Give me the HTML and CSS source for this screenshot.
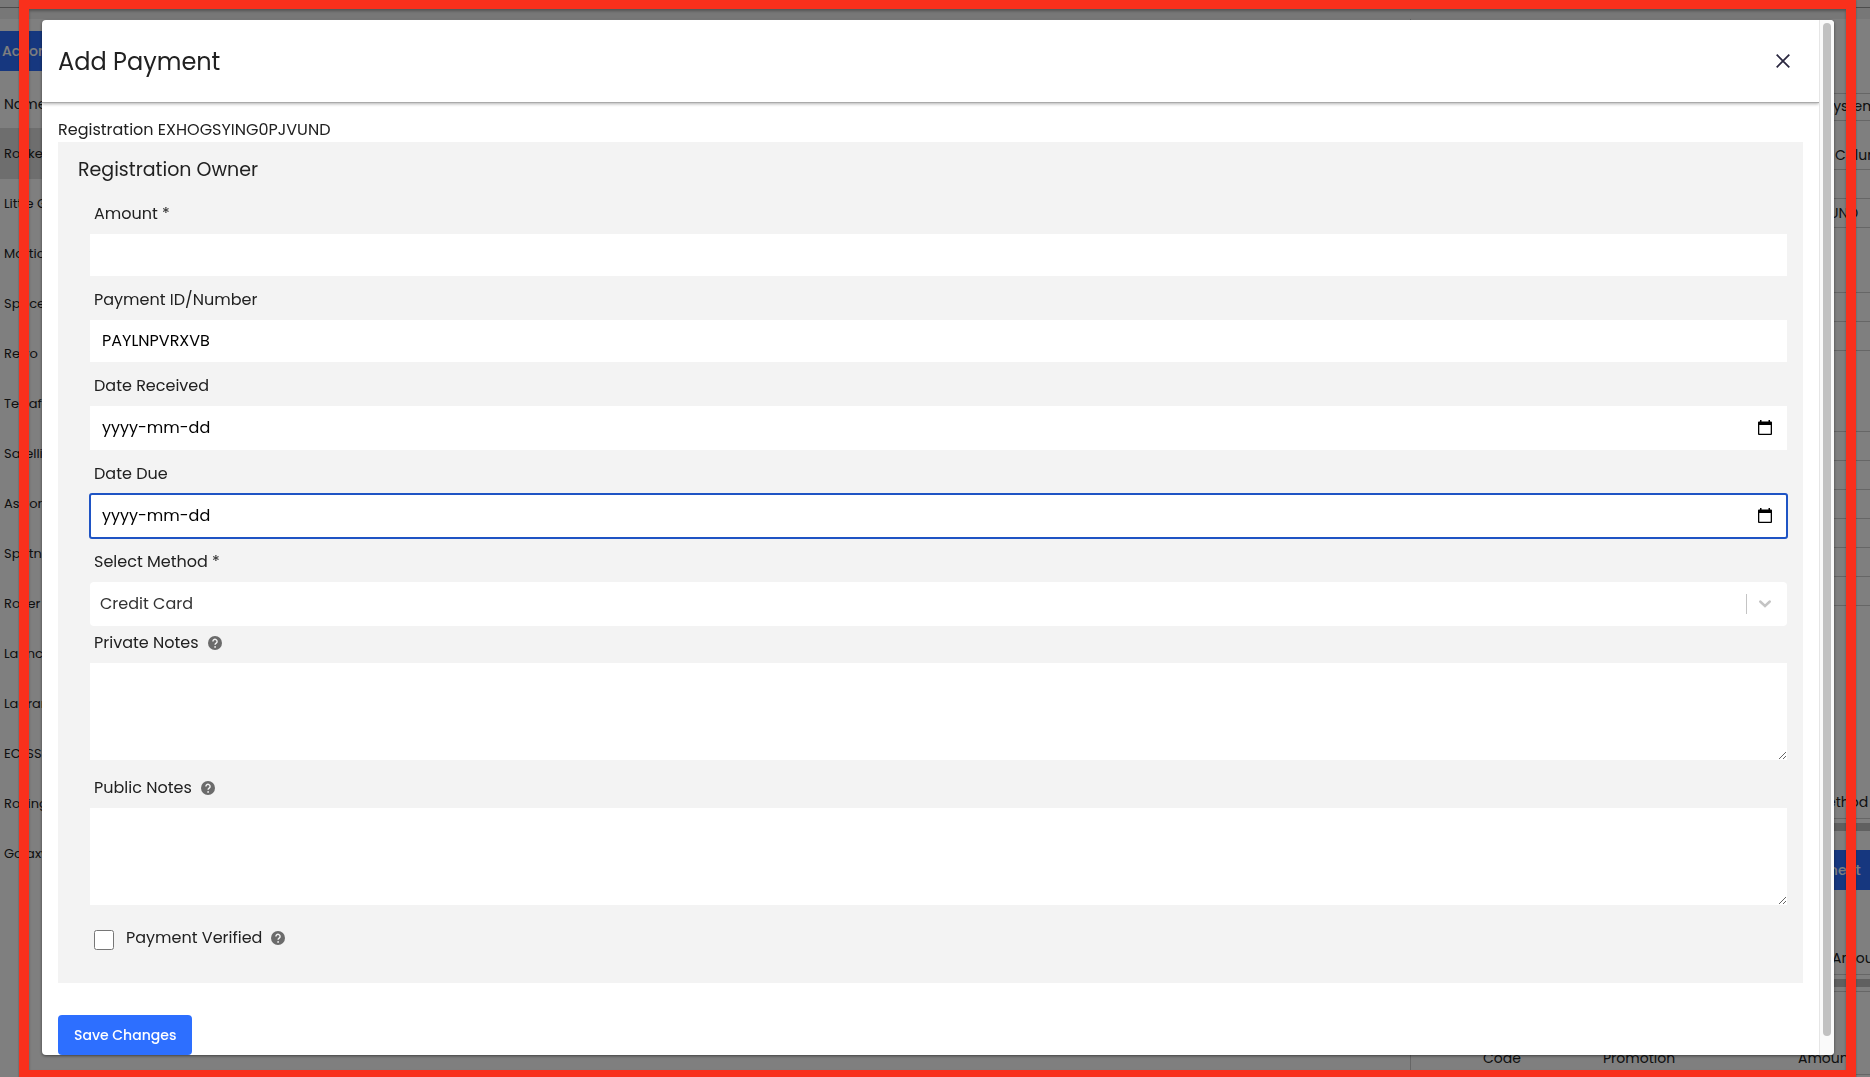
FILE: index.html
```html
<!DOCTYPE html>
<html lang="en">
<head>
  <meta charset="utf-8">
  <title>Add Payment</title>
  <link rel="stylesheet" href="styles.css">
</head>
<body>
  <!-- page behind the dialog -->
  <div class="page">
    <div class="topbar"></div>
    <div class="subbar"></div>
    <div class="columns">
      <div class="list">
        <button type="button" class="page-button">Actions</button>
        <div class="list-head">Name</div>
        <div class="list-row selected">Rocket</div>
        <div class="list-row">Little G</div>
        <div class="list-row">Martian</div>
        <div class="list-row">Space</div>
        <div class="list-row">Retro</div>
        <div class="list-row">Terraform</div>
        <div class="list-row">Satellite</div>
        <div class="list-row">Astronaut</div>
        <div class="list-row">Sputnik</div>
        <div class="list-row">Rover</div>
        <div class="list-row">Launch</div>
        <div class="list-row">Lagrange</div>
        <div class="list-row">ECLSS</div>
        <div class="list-row">Roving</div>
        <div class="list-row">Galaxy</div>
      </div>
      <div class="detail">
        <div class="line tall"></div>
        <div class="line system">System</div>
        <div class="line column">Column</div>
        <div class="line"></div>
        <div class="line code">UND</div>
        <div class="line medium"></div>
        <div class="line"></div>
        <div class="line"></div>
        <div class="line large"></div>
        <div class="line"></div>
        <div class="line"></div>
        <div class="line"></div>
        <div class="line"></div>
        <div class="line"></div>
        <div class="line"></div>
        <div class="line method">Method</div>
        <div class="scroller"></div>
        <button type="button" class="page-button payment">Add Payment</button>
        <div class="line amount">Amount</div>
        <div class="scroller"></div>
        <div class="promo">
          <span>Code</span>
          <span>Promotion</span>
          <span>Amount</span>
        </div>
      </div>
    </div>
  </div>
  <div class="overlay"></div>
  <div class="frame"></div>

  <div class="modal" role="dialog" aria-labelledby="modalTitle">
    <div class="modal-main">
      <div class="modal-header">
        <h1 id="modalTitle">Add Payment</h1>
        <button type="button" class="close" aria-label="Close">
          <svg width="14" height="14" viewBox="0 0 14 14"><path d="M0.700 0.700L13.300 13.300M13.300 0.700L0.700 13.300" stroke="#2b2840" stroke-width="1.800" fill="none"/></svg>
        </button>
      </div>
      <form class="modal-body">
        <p class="registration">Registration EXHOGSYING0PJVUND</p>
        <div class="panel">
          <h2>Registration Owner</h2>

          <div class="field">
            <label for="amount">Amount *</label>
            <input type="text" id="amount">
          </div>

          <div class="field">
            <label for="paymentId">Payment ID/Number</label>
            <input type="text" id="paymentId" value="PAYLNPVRXVB">
          </div>

          <div class="field">
            <label for="dateReceived">Date Received</label>
            <div class="control date">
              <input type="text" id="dateReceived" placeholder="yyyy-mm-dd">
              <button type="button" class="calendar" aria-label="Pick date received">
                <svg width="14" height="16" viewBox="0 0 14 16"><path d="M2 0h1.500v1.500h7V0H12v1.500h1a1 1 0 0 1 1 1V14a1 1 0 0 1-1 1H1a1 1 0 0 1-1-1V2.500a1 1 0 0 1 1-1h1zM1.300 5v8.700h11.400V5z" fill="#000" fill-rule="evenodd"/></svg>
              </button>
            </div>
          </div>

          <div class="field">
            <label for="dateDue">Date Due</label>
            <div class="control date active">
              <input type="text" id="dateDue" placeholder="yyyy-mm-dd">
              <button type="button" class="calendar" aria-label="Pick date due">
                <svg width="14" height="16" viewBox="0 0 14 16"><path d="M2 0h1.500v1.500h7V0H12v1.500h1a1 1 0 0 1 1 1V14a1 1 0 0 1-1 1H1a1 1 0 0 1-1-1V2.500a1 1 0 0 1 1-1h1zM1.300 5v8.700h11.400V5z" fill="#000" fill-rule="evenodd"/></svg>
              </button>
            </div>
          </div>

          <div class="field">
            <label for="method">Select Method *</label>
            <div class="control method-select">
              <select id="method">
                <option selected>Credit Card</option>
              </select>
              <span class="arrow">
                <svg width="12" height="8" viewBox="0 0 12 8"><path d="M1.200 1.500L6 6L10.800 1.500" stroke="#c4c4c4" stroke-width="2.400" stroke-linecap="round" fill="none"/></svg>
              </span>
            </div>
          </div>

          <div class="field tight">
            <label for="privateNotes">Private Notes
              <svg class="help" width="14" height="14" viewBox="0 0 14 14"><circle cx="7" cy="7" r="7" fill="#6b6b6b"/><path d="M4.900 5.400a2.100 2.100 0 1 1 3.300 1.700C7.500 7.600 7.100 7.900 7.100 8.800" stroke="#f3f3f3" stroke-width="1.400" fill="none"/><circle cx="7.100" cy="10.900" r="0.900" fill="#f3f3f3"/></svg>
            </label>
            <textarea id="privateNotes"></textarea>
          </div>

          <div class="field loose">
            <label for="publicNotes">Public Notes
              <svg class="help" width="14" height="14" viewBox="0 0 14 14"><circle cx="7" cy="7" r="7" fill="#6b6b6b"/><path d="M4.900 5.400a2.100 2.100 0 1 1 3.300 1.700C7.500 7.600 7.100 7.900 7.100 8.800" stroke="#f3f3f3" stroke-width="1.400" fill="none"/><circle cx="7.100" cy="10.900" r="0.900" fill="#f3f3f3"/></svg>
            </label>
            <textarea id="publicNotes"></textarea>
          </div>

          <div class="check">
            <input type="checkbox" id="verified">
            <label for="verified">Payment Verified
              <svg class="help" width="14" height="14" viewBox="0 0 14 14"><circle cx="7" cy="7" r="7" fill="#6b6b6b"/><path d="M4.900 5.400a2.100 2.100 0 1 1 3.300 1.700C7.500 7.600 7.100 7.900 7.100 8.800" stroke="#f3f3f3" stroke-width="1.400" fill="none"/><circle cx="7.100" cy="10.900" r="0.900" fill="#f3f3f3"/></svg>
            </label>
          </div>
        </div>
        <button type="button" class="save">Save Changes</button>
      </form>
    </div>
    <div class="scrollbar"><div class="thumb"></div></div>
  </div>
</body>
</html>
```

FILE: styles.css
```css
* {
  box-sizing: border-box;
}

body {
  margin: 0;
  height: 100vh;
  overflow: hidden;
  font-family: Poppins, Inter, "Liberation Sans", sans-serif;
  font-size: 16px;
  color: #212121;
}

button, input, select, textarea {
  font-family: inherit;
  font-size: 16px;
}

/* background page */
.page {
  font-size: 14px;
  color: #222;
  white-space: nowrap;
}

.topbar {
  height: 8px;
  background-color: #f2f2f2;
  border-bottom: 1px solid #999;
}

.subbar {
  height: 11px;
  background-color: #eee;
}

.columns {
  display: flex;
  justify-content: space-between;
}

.list {
  width: 300px;
  padding-top: 12px;
}

.page-button {
  display: block;
  width: 100%;
  height: 40px;
  padding: 0 2px;
  border: none;
  background-color: #2d6fff;
  color: #fff;
  font-size: 14px;
  font-weight: 500;
  text-align: left;
}

.list-head {
  height: 58px;
  padding-left: 4px;
  line-height: 66px;
  border-bottom: 1px solid #ddd;
}

.list-row {
  height: 50px;
  padding-left: 4px;
  line-height: 50px;
  font-size: 13px;
}

.selected {
  background-color: #dcdcdc;
}

.detail {
  width: 460px;
  border-left: 1px solid #ccc;
}

.line {
  height: 29px;
  line-height: 28px;
  padding-left: 400px;
  border-bottom: 1px solid #ccc;
}

.tall {
  height: 75px;
}

.system {
  height: 27px;
  padding-left: 414px;
  line-height: 24px;
}

.column {
  height: 49px;
  padding-left: 424px;
  line-height: 68px;
}

.code {
  padding-left: 418px;
}

.medium {
  height: 65px;
}

.large {
  height: 81px;
}

.method {
  height: 213px;
  padding-top: 182px;
  padding-left: 404px;
}

.scroller {
  height: 16px;
  border-top: 4px solid #fff;
  border-bottom: 4px solid #fff;
  background-color: #c0c0c0;
}

.payment {
  margin-top: 15px;
  padding-left: 354px;
}

.amount {
  height: 85px;
  padding-top: 54px;
  padding-left: 421px;
}

.promo {
  display: flex;
  height: 84px;
  padding-top: 52px;
  padding-left: 72px;
  line-height: 29px;
  border-top: 1px solid #ccc;
  border-bottom: 1px solid #ccc;
}

.promo span:nth-child(1) {
  width: 120px;
}

.promo span:nth-child(2) {
  width: 195px;
}

.overlay {
  position: fixed;
  inset: 0;
  background-color: rgba(0, 0, 0, 0.5);
}

.frame {
  position: fixed;
  inset: -1px 14px -3px 19px;
  border: 10px solid #f9301c;
  box-shadow: 0 1px 2px rgba(0, 0, 0, 0.3), inset 0 2px 3px rgba(0, 0, 0, 0.3);
}

/* dialog */
.modal {
  position: fixed;
  inset: 20px 36px 22px 42px;
  display: flex;
  overflow: hidden;
  background-color: #fff;
  border-radius: 4px;
  box-shadow: 0 1px 3px rgba(0, 0, 0, 0.5);
}

.modal-main {
  flex: 1;
}

.modal-header {
  display: flex;
  align-items: center;
  justify-content: space-between;
  height: 83px;
  padding: 0 23px 0 16px;
  border-bottom: 1px solid #aaa;
  box-shadow: 0 1px 3px rgba(0, 0, 0, 0.3);
}

h1 {
  margin: 0;
  font-size: 24px;
  font-weight: 400;
}

h2 {
  margin: 0 0 6px 20px;
  font-size: 19px;
  font-weight: 400;
  line-height: 28px;
}

.close {
  display: flex;
  padding: 6px;
  border: none;
  background: none;
  cursor: pointer;
}

.modal-body {
  padding: 15px 16px 0;
}

.registration {
  margin: 0;
  line-height: 24px;
}

.panel {
  height: 841px;
  padding-top: 14px;
  background-color: #f3f3f3;
}

.field {
  padding: 12px 16px 0 32px;
}

.field label {
  display: flex;
  align-items: center;
  gap: 9px;
  margin-bottom: 8px;
  padding-left: 4px;
  line-height: 24px;
}

.tight {
  padding-top: 5px;
}

.loose {
  padding-top: 16px;
}

.field input, .field select, .field textarea {
  display: block;
  width: 100%;
  height: 42px;
  padding: 0 12px 2px;
  border: none;
  outline: none;
  background-color: #fff;
  color: #000;
}

.field textarea {
  height: 97px;
  padding: 12px;
}

.field input::placeholder {
  color: #000;
  opacity: 1;
}

.control {
  display: flex;
  align-items: center;
  height: 44px;
  background-color: #fff;
}

.active {
  border-radius: 2px;
  outline: 2px solid #1f54c4;
  outline-offset: -1px;
}

.calendar {
  display: flex;
  padding: 4px 15px;
  border: none;
  background: none;
}

.method-select {
  position: relative;
  border-radius: 4px;
}

.method-select select {
  padding: 0 10px 2px;
  appearance: none;
  background: none;
  color: #333;
}

.arrow {
  position: absolute;
  right: 0;
  display: flex;
  align-items: center;
  height: 20px;
  padding: 0 16px 0 12px;
  border-left: 1px solid #c4c4c4;
  pointer-events: none;
}

.check {
  display: flex;
  padding: 21px 36px 0;
}

.check input {
  width: 20px;
  height: 20px;
  margin: 4px 12px 0 0;
}

.check label {
  display: flex;
  align-items: center;
  gap: 9px;
  line-height: 24px;
}

.save {
  display: block;
  height: 40px;
  margin-top: 32px;
  padding: 0 16px;
  border: none;
  border-radius: 4px;
  background-color: #2d6fff;
  color: #fff;
  font-size: 14px;
  font-weight: 500;
  cursor: pointer;
}

.scrollbar {
  width: 15px;
  padding: 3px 3px 19px;
  border-left: 1px solid #e6e6e6;
  background-color: #fafafa;
}

.thumb {
  width: 8px;
  height: 100%;
  border-radius: 4px;
  background-color: #c1c1c1;
}
```
